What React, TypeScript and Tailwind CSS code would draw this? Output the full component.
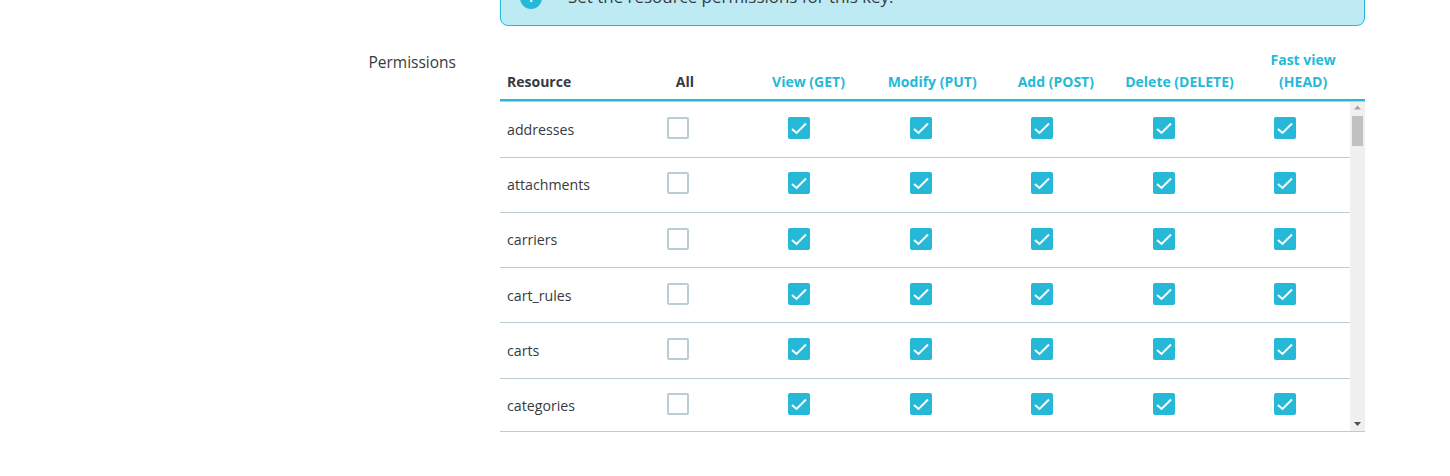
const resources = ['addresses', 'attachments', 'carriers', 'cart_rules', 'carts', 'categories'];
const methods = ['View (GET)', 'Modify (PUT)', 'Add (POST)', 'Delete (DELETE)', 'Fast view (HEAD)'];

function Checkbox({ checked }: { checked: boolean }) {
  if (!checked) {
    return <div className="w-[22px] h-[22px] rounded-[2px] border-2 border-[#bbcdd2] bg-white" />;
  }
  return (
    <div className="w-[22px] h-[22px] rounded-[2px] bg-[#25b9d7] flex items-center justify-center">
      <svg width="22" height="22" viewBox="0 0 22 22" fill="none" stroke="white" strokeWidth="2">
        <path d="M4 12l4.5 4L18 6.5" />
      </svg>
    </div>
  );
}

export default function App() {
  return (
    <div className="w-[1450px] h-[476px] overflow-hidden bg-white text-[#363a41] text-sm font-['Open_Sans',sans-serif]">
      {/* Info alert, top part is scrolled out of view */}
      <div className="ml-[500px] w-[865px] h-[56px] -mt-[30px] rounded-[8px] border border-[#25b9d7] bg-[#beeaf3] flex items-center pl-[19px]">
        <div className="w-[22px] h-[22px] rounded-full bg-[#25b9d7] flex items-center justify-center text-white font-bold text-xs">i</div>
        <p className="ml-[26px] -mt-[2px] text-[16.95px]">Set the resource permissions for this key.</p>
      </div>

      <div className="flex mt-[25px]">
        <div className="w-[456px] text-right text-[15.5px] leading-[22px]">Permissions</div>

        <div className="ml-[44px] w-[865px]">
          {/* Header */}
          <div className="grid grid-cols-[123px_repeat(6,1fr)] h-[52px] -mt-[2px] items-end border-b-2 border-[#25b9d7] font-bold text-sm leading-[22px] pb-[6px]">
            <div className="pl-[7px]">Resource</div>
            <div className="text-center">All</div>
            {methods.map((m) => (
              <div key={m} className={m === 'Fast view (HEAD)' ? 'text-center text-[#25b9d7] px-[20px]' : 'text-center text-[#25b9d7] whitespace-nowrap'}>
                {m}
              </div>
            ))}
          </div>

          {/* Body */}
          <div className="flex h-[331px] overflow-hidden border-t border-b border-[#bbcdd2]">
            <div className="w-[850px] pt-[0.4px]">
              {resources.map((r) => (
                <div key={r} className="grid grid-cols-7 h-[55.25px] border-b border-[#bbcdd2] items-center">
                  <div className="pl-[7px] pt-[1px] text-[14.2px]">{r}</div>
                  <div className="pl-[45.5px] -mt-[3px]">
                    <Checkbox checked={false} />
                  </div>
                  {methods.map((m) => (
                    <div key={m} className="pl-[45.5px] -mt-[3px]">
                      <Checkbox checked />
                    </div>
                  ))}
                </div>
              ))}
            </div>

            {/* Scrollbar */}
            <div className="w-[15px] bg-[#f0f0f0] flex flex-col items-center">
              <svg width="15" height="14" viewBox="0 0 15 14" className="shrink-0 text-[#a3a3a3]" fill="currentColor">
                <path d="M7.5 3.5L11 7.5H4z" />
              </svg>
              <div className="w-[11px] h-[30px] bg-[#c1c1c1] shrink-0" />
              <div className="flex-1" />
              <svg width="15" height="14" viewBox="0 0 15 14" className="shrink-0 text-[#505050]" fill="currentColor">
                <path d="M4 5h7L7.5 9z" />
              </svg>
            </div>
          </div>
        </div>
      </div>
    </div>
  );
}
